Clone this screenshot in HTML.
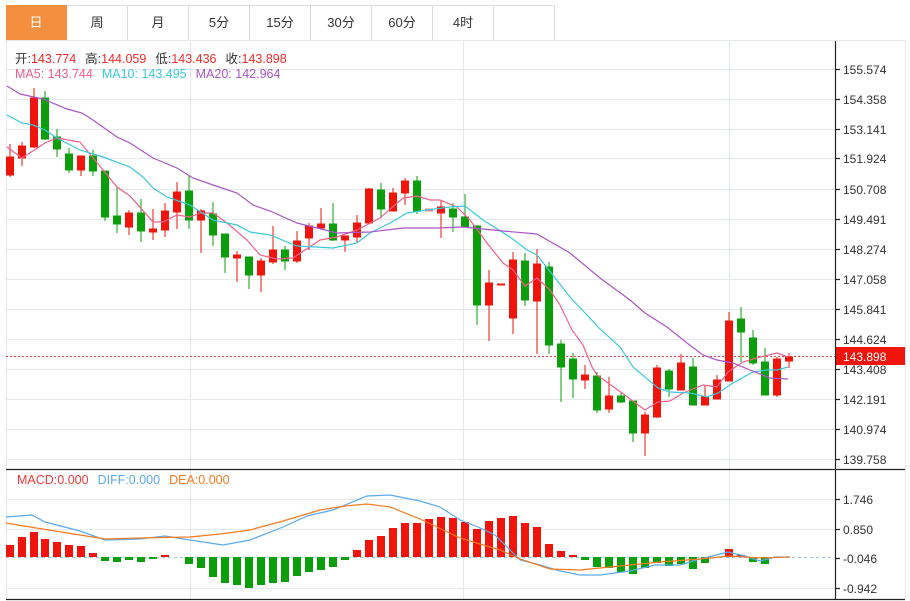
<!DOCTYPE html>
<html><head><meta charset="utf-8"><style>
body{margin:0;background:#fff;width:910px;height:601px;overflow:hidden;font-family:"Liberation Sans","Noto Sans CJK SC",sans-serif;}
.tabs{position:absolute;left:6px;top:5px;height:35px;display:flex;}
.tab{width:60px;height:34px;border:1px solid #dcdcdc;border-left:none;line-height:34px;text-align:center;font-size:13px;color:#333;}
.tab:first-child{background:#f38f3f;color:#fff;border-color:#f38f3f;}
.t{position:absolute;font-size:12.5px;white-space:nowrap;}
.t span.g{margin-left:9px;}
</style></head><body>
<div class="tabs"><div class="tab">日</div><div class="tab">周</div><div class="tab">月</div><div class="tab">5分</div><div class="tab">15分</div><div class="tab">30分</div><div class="tab">60分</div><div class="tab">4时</div><div class="tab"></div></div>
<svg width="910" height="601" style="position:absolute;left:0;top:0" xmlns="http://www.w3.org/2000/svg">
<g stroke="#e3e9ef" stroke-width="1">
<line x1="6" y1="40.5" x2="905" y2="40.5"/>
<line x1="6.5" y1="40" x2="6.5" y2="599"/>
<line x1="905.5" y1="40" x2="905.5" y2="599"/>
<line x1="190.5" y1="40" x2="190.5" y2="599"/><line x1="463.5" y1="40" x2="463.5" y2="599"/><line x1="729.5" y1="40" x2="729.5" y2="599"/>
<line x1="6" y1="69.5" x2="835" y2="69.5"/><line x1="6" y1="99.5" x2="835" y2="99.5"/><line x1="6" y1="129.5" x2="835" y2="129.5"/><line x1="6" y1="158.5" x2="835" y2="158.5"/><line x1="6" y1="189.5" x2="835" y2="189.5"/><line x1="6" y1="219.5" x2="835" y2="219.5"/><line x1="6" y1="249.5" x2="835" y2="249.5"/><line x1="6" y1="279.5" x2="835" y2="279.5"/><line x1="6" y1="309.5" x2="835" y2="309.5"/><line x1="6" y1="339.5" x2="835" y2="339.5"/><line x1="6" y1="369.5" x2="835" y2="369.5"/><line x1="6" y1="399.5" x2="835" y2="399.5"/><line x1="6" y1="429.5" x2="835" y2="429.5"/><line x1="6" y1="459.5" x2="835" y2="459.5"/>
<line x1="6" y1="499.5" x2="835" y2="499.5"/><line x1="6" y1="529.5" x2="835" y2="529.5"/><line x1="6" y1="588.5" x2="835" y2="588.5"/>
</g>
<g stroke="#222" stroke-width="1.2">
<line x1="6" y1="469.5" x2="905" y2="469.5"/><line x1="6" y1="599.5" x2="905" y2="599.5"/>
<line x1="835.5" y1="41" x2="835.5" y2="600"/>
<line x1="835" y1="69.5" x2="840" y2="69.5"/><line x1="835" y1="99.5" x2="840" y2="99.5"/><line x1="835" y1="129.5" x2="840" y2="129.5"/><line x1="835" y1="158.5" x2="840" y2="158.5"/><line x1="835" y1="189.5" x2="840" y2="189.5"/><line x1="835" y1="219.5" x2="840" y2="219.5"/><line x1="835" y1="249.5" x2="840" y2="249.5"/><line x1="835" y1="279.5" x2="840" y2="279.5"/><line x1="835" y1="309.5" x2="840" y2="309.5"/><line x1="835" y1="339.5" x2="840" y2="339.5"/><line x1="835" y1="369.5" x2="840" y2="369.5"/><line x1="835" y1="399.5" x2="840" y2="399.5"/><line x1="835" y1="429.5" x2="840" y2="429.5"/><line x1="835" y1="459.5" x2="840" y2="459.5"/>
<line x1="835" y1="499.5" x2="840" y2="499.5"/><line x1="835" y1="529.5" x2="840" y2="529.5"/><line x1="835" y1="558.5" x2="840" y2="558.5"/><line x1="835" y1="588.5" x2="840" y2="588.5"/>
</g>
<g font-size="12" fill="#333" font-family="Liberation Sans,sans-serif">
<text x="843" y="74">155.574</text><text x="843" y="104">154.358</text><text x="843" y="134">153.141</text><text x="843" y="163">151.924</text><text x="843" y="194">150.708</text><text x="843" y="224">149.491</text><text x="843" y="254">148.274</text><text x="843" y="284">147.058</text><text x="843" y="314">145.841</text><text x="843" y="344">144.624</text><text x="843" y="374">143.408</text><text x="843" y="404">142.191</text><text x="843" y="434">140.974</text><text x="843" y="464">139.758</text>
<text x="843" y="504">1.746</text><text x="843" y="534">0.850</text><text x="843" y="563">-0.046</text><text x="843" y="593">-0.942</text>
</g>
<line x1="6" y1="356.5" x2="835" y2="356.5" stroke="#f04040" stroke-dasharray="2,2"/>
<line x1="6" y1="557.5" x2="835" y2="557.5" stroke="#9cc8e0" stroke-dasharray="3,3"/>
<rect x="836" y="347" width="69" height="18" fill="#f0140a"/>
<text x="843" y="361" font-size="12" fill="#fff">143.898</text>
<g stroke-width="1">
<g fill="#f0140a" stroke="#f0140a">
<line x1="10" y1="144" x2="10" y2="177"/><rect x="6.5" y="157" width="7" height="18"/>
<line x1="22" y1="142" x2="22" y2="166"/><rect x="18.5" y="146" width="7" height="12"/>
<line x1="34" y1="88" x2="34" y2="148"/><rect x="30.5" y="98" width="7" height="49"/>
<line x1="81" y1="156" x2="81" y2="176"/><rect x="77.5" y="156" width="7" height="14"/>
<line x1="129" y1="210" x2="129" y2="235"/><rect x="125.5" y="213" width="7" height="14"/>
<line x1="153" y1="209" x2="153" y2="240"/><rect x="149.5" y="229" width="7" height="3"/>
<line x1="165" y1="203" x2="165" y2="237"/><rect x="161.5" y="211" width="7" height="19"/>
<line x1="177" y1="182" x2="177" y2="229"/><rect x="173.5" y="192" width="7" height="20"/>
<line x1="201" y1="209" x2="201" y2="253"/><rect x="197.5" y="211" width="7" height="9"/>
<line x1="237" y1="251" x2="237" y2="282"/><rect x="233.5" y="255" width="7" height="3"/>
<line x1="261" y1="258" x2="261" y2="292"/><rect x="257.5" y="261" width="7" height="14"/>
<line x1="273" y1="226" x2="273" y2="264"/><rect x="269.5" y="250" width="7" height="12"/>
<line x1="297" y1="231" x2="297" y2="263"/><rect x="293.5" y="241" width="7" height="20"/>
<line x1="309" y1="223" x2="309" y2="250"/><rect x="305.5" y="226" width="7" height="12"/>
<line x1="321" y1="208" x2="321" y2="228"/><rect x="317.5" y="224" width="7" height="4"/>
<line x1="345" y1="236" x2="345" y2="252"/><rect x="341.5" y="236" width="7" height="4"/>
<line x1="357" y1="215" x2="357" y2="242"/><rect x="353.5" y="223" width="7" height="14"/>
<line x1="369" y1="188" x2="369" y2="223"/><rect x="365.5" y="189" width="7" height="34"/>
<line x1="393" y1="188" x2="393" y2="211"/><rect x="389.5" y="193" width="7" height="18"/>
<line x1="405" y1="178" x2="405" y2="205"/><rect x="401.5" y="181" width="7" height="12"/>
<rect x="425.5" y="209" width="7" height="2" fill="#f08080" stroke="#f08080"/>
<line x1="441" y1="200" x2="441" y2="238"/><rect x="437.5" y="207" width="7" height="6"/>
<line x1="489" y1="270" x2="489" y2="341"/><rect x="485.5" y="283" width="7" height="22"/>
<rect x="497.5" y="284" width="7" height="1"/>
<line x1="513" y1="252" x2="513" y2="334"/><rect x="509.5" y="260" width="7" height="58"/>
<line x1="537" y1="249" x2="537" y2="354"/><rect x="533.5" y="264" width="7" height="37"/>
<line x1="585" y1="365" x2="585" y2="389"/><rect x="581.5" y="375" width="7" height="5"/>
<line x1="609" y1="377" x2="609" y2="413"/><rect x="605.5" y="396" width="7" height="13"/>
<line x1="645" y1="412" x2="645" y2="456"/><rect x="641.5" y="415" width="7" height="18"/>
<line x1="657" y1="365" x2="657" y2="418"/><rect x="653.5" y="368" width="7" height="49"/>
<line x1="681" y1="354" x2="681" y2="390"/><rect x="677.5" y="363" width="7" height="27"/>
<line x1="705" y1="386" x2="705" y2="405"/><rect x="701.5" y="397" width="7" height="8"/>
<line x1="717" y1="375" x2="717" y2="399"/><rect x="713.5" y="380" width="7" height="19"/>
<line x1="729" y1="312" x2="729" y2="381"/><rect x="725.5" y="321" width="7" height="60"/>
<line x1="777" y1="357" x2="777" y2="397"/><rect x="773.5" y="359" width="7" height="36"/>
<line x1="789" y1="353" x2="789" y2="368"/><rect x="785.5" y="357" width="7" height="4"/>
</g>
<g fill="#0a9f0a" stroke="#0a9f0a">
<line x1="45" y1="91" x2="45" y2="140"/><rect x="41.5" y="98" width="7" height="41"/>
<line x1="57" y1="129" x2="57" y2="157"/><rect x="53.5" y="137" width="7" height="12"/>
<line x1="69" y1="148" x2="69" y2="173"/><rect x="65.5" y="154" width="7" height="16"/>
<line x1="93" y1="150" x2="93" y2="176"/><rect x="89.5" y="156" width="7" height="15"/>
<line x1="105" y1="171" x2="105" y2="221"/><rect x="101.5" y="171" width="7" height="46"/>
<line x1="117" y1="187" x2="117" y2="233"/><rect x="113.5" y="216" width="7" height="8"/>
<line x1="141" y1="199" x2="141" y2="242"/><rect x="137.5" y="213" width="7" height="18"/>
<line x1="189" y1="175" x2="189" y2="229"/><rect x="185.5" y="191" width="7" height="29"/>
<line x1="213" y1="202" x2="213" y2="246"/><rect x="209.5" y="214" width="7" height="21"/>
<line x1="225" y1="234" x2="225" y2="273"/><rect x="221.5" y="234" width="7" height="23"/>
<line x1="249" y1="257" x2="249" y2="289"/><rect x="245.5" y="257" width="7" height="18"/>
<line x1="285" y1="246" x2="285" y2="270"/><rect x="281.5" y="250" width="7" height="11"/>
<line x1="333" y1="203" x2="333" y2="241"/><rect x="329.5" y="224" width="7" height="16"/>
<line x1="381" y1="183" x2="381" y2="218"/><rect x="377.5" y="190" width="7" height="19"/>
<line x1="417" y1="176" x2="417" y2="214"/><rect x="413.5" y="181" width="7" height="30"/>
<line x1="453" y1="203" x2="453" y2="232"/><rect x="449.5" y="209" width="7" height="8"/>
<line x1="465" y1="194" x2="465" y2="227"/><rect x="461.5" y="217" width="7" height="10"/>
<line x1="477" y1="225" x2="477" y2="325"/><rect x="473.5" y="226" width="7" height="79"/>
<line x1="525" y1="253" x2="525" y2="306"/><rect x="521.5" y="261" width="7" height="39"/>
<line x1="549" y1="262" x2="549" y2="354"/><rect x="545.5" y="267" width="7" height="78"/>
<line x1="561" y1="340" x2="561" y2="402"/><rect x="557.5" y="344" width="7" height="23"/>
<line x1="573" y1="353" x2="573" y2="398"/><rect x="569.5" y="359" width="7" height="20"/>
<line x1="597" y1="372" x2="597" y2="413"/><rect x="593.5" y="376" width="7" height="34"/>
<line x1="621" y1="393" x2="621" y2="403"/><rect x="617.5" y="396" width="7" height="6"/>
<line x1="633" y1="401" x2="633" y2="442"/><rect x="629.5" y="401" width="7" height="32"/>
<line x1="669" y1="369" x2="669" y2="397"/><rect x="665.5" y="371" width="7" height="18"/>
<line x1="693" y1="358" x2="693" y2="405"/><rect x="689.5" y="367" width="7" height="38"/>
<line x1="741" y1="307" x2="741" y2="362"/><rect x="737.5" y="319" width="7" height="13"/>
<line x1="753" y1="330" x2="753" y2="365"/><rect x="749.5" y="338" width="7" height="25"/>
<line x1="765" y1="348" x2="765" y2="395"/><rect x="761.5" y="362" width="7" height="33"/>
</g>
</g>
<g fill="none" stroke-width="1.2">
<polyline stroke="#f0608a" points="7,147 22,158 45,143 57,138 80,142 103,170 117,187 130,196 153,222 163,222 177,215 190,217 200,213 213,213 227,223 247,240 260,255 277,259 293,258 320,240 337,237 357,230 380,218 403,198 417,196 430,200 440,200 457,207 470,220 487,243 503,263 513,270 525,286 537,278 550,290 560,305 572,330 583,345 592,367 597,375 622,393 645,410 658,402 670,401 683,393 703,385 717,387 728,372 743,362 760,357 777,353 788,357"/>
<polyline stroke="#3cc8dc" points="7,115 22,123 33,125 45,130 57,138 80,150 103,157 130,167 143,177 153,188 167,197 190,205 213,220 237,225 250,232 270,235 297,246 333,248 357,243 370,233 390,223 407,213 427,210 450,207 465,206 483,220 510,237 527,250 537,255 570,297 600,329 620,347 633,367 658,388 670,392 690,393 707,397 718,393 733,383 753,372 767,370 777,370 788,367"/>
<polyline stroke="#aa55c8" points="7,86 20,94 43,99 67,109 82,113 93,120 117,137 130,143 153,158 177,168 193,178 213,185 237,193 253,205 270,211 297,223 337,233 370,232 403,228 437,228 463,227 483,229 503,231 537,234 570,253 600,278 630,300 645,313 667,327 687,343 703,355 717,360 733,363 750,370 770,378 788,379"/>
</g>
<g fill="#f0140a">
<rect x="6" y="545" width="8" height="12"/><rect x="18" y="537" width="8" height="20"/><rect x="30" y="532" width="8" height="25"/><rect x="41" y="539" width="8" height="18"/><rect x="53" y="542" width="8" height="15"/><rect x="65" y="545" width="8" height="12"/><rect x="77" y="546" width="8" height="11"/><rect x="89" y="553" width="8" height="4"/><rect x="161" y="555" width="8" height="2"/>
<rect x="353" y="550" width="8" height="7"/><rect x="365" y="540" width="8" height="17"/><rect x="377" y="536" width="8" height="21"/><rect x="389" y="528" width="8" height="29"/><rect x="401" y="523" width="8" height="34"/><rect x="413" y="523" width="8" height="34"/><rect x="425" y="519" width="8" height="38"/><rect x="437" y="517" width="8" height="40"/><rect x="449" y="518" width="8" height="39"/><rect x="461" y="522" width="8" height="35"/><rect x="473" y="529" width="8" height="28"/><rect x="485" y="521" width="8" height="36"/><rect x="497" y="518" width="8" height="39"/><rect x="509" y="516" width="8" height="41"/><rect x="521" y="523" width="8" height="34"/><rect x="533" y="527" width="8" height="30"/><rect x="545" y="544" width="8" height="13"/><rect x="557" y="551" width="8" height="6"/><rect x="569" y="555" width="8" height="2"/>
<rect x="725" y="549" width="8" height="8"/><rect x="737" y="555" width="8" height="2"/>
</g>
<g fill="#0a9f0a">
<rect x="101" y="557" width="8" height="4"/><rect x="113" y="557" width="8" height="5"/><rect x="125" y="557" width="8" height="3"/><rect x="137" y="557" width="8" height="5"/><rect x="149" y="557" width="8" height="2"/>
<rect x="185" y="557" width="8" height="7"/><rect x="197" y="557" width="8" height="11"/><rect x="209" y="557" width="8" height="20"/><rect x="221" y="557" width="8" height="26"/><rect x="233" y="557" width="8" height="28"/><rect x="245" y="557" width="8" height="31"/><rect x="257" y="557" width="8" height="28"/><rect x="269" y="557" width="8" height="26"/><rect x="281" y="557" width="8" height="25"/><rect x="293" y="557" width="8" height="19"/><rect x="305" y="557" width="8" height="15"/><rect x="317" y="557" width="8" height="13"/><rect x="329" y="557" width="8" height="10"/><rect x="341" y="557" width="8" height="3"/>
<rect x="581" y="557" width="8" height="3"/><rect x="593" y="557" width="8" height="10"/><rect x="605" y="557" width="8" height="11"/><rect x="617" y="557" width="8" height="15"/><rect x="629" y="557" width="8" height="17"/><rect x="641" y="557" width="8" height="11"/><rect x="653" y="557" width="8" height="6"/><rect x="665" y="557" width="8" height="9"/><rect x="677" y="557" width="8" height="7"/><rect x="689" y="557" width="8" height="12"/><rect x="701" y="557" width="8" height="6"/><rect x="749" y="557" width="8" height="5"/><rect x="761" y="557" width="8" height="7"/>
</g>
<g fill="none" stroke-width="1.2">
<polyline stroke="#5aaaf0" points="6,517 32,515 45,522 80,531 105,540 140,539 165,536 190,540 223,545 250,540 283,527 307,516 333,510 367,496 390,495 420,501 440,507 460,520 478,527 495,535 510,550 520,560 540,565 560,571 580,575 600,575 630,571 655,565 680,565 700,559 728,552 745,556 760,561 775,557 790,557"/>
<polyline stroke="#f57a20" points="6,523 30,527 80,535 105,539 140,538 190,537 220,534 250,530 283,521 320,510 345,506 367,504 390,507 420,519 460,538 500,550 520,559 550,569 580,570 620,566 660,562 700,559 730,556 760,558 790,557"/>
</g>
</svg>
<div class="t" style="left:15px;top:48px;color:#333">开:<span style="color:#f02a2a">143.774</span><span class="g"></span>高:<span style="color:#f02a2a">144.059</span><span class="g"></span>低:<span style="color:#f02a2a">143.436</span><span class="g"></span>收:<span style="color:#f02a2a">143.898</span></div>
<div class="t" style="left:15px;top:67px;"><span style="color:#f0608a">MA5: 143.744</span><span class="g"></span><span style="color:#3cc8dc">MA10: 143.495</span><span class="g"></span><span style="color:#aa55c8">MA20: 142.964</span></div>
<div class="t" style="left:17px;top:473px;"><span style="color:#f03a3a">MACD:0.000</span><span class="g"></span><span style="color:#5aaaf0">DIFF:0.000</span><span class="g"></span><span style="color:#f57a20">DEA:0.000</span></div>
</body></html>
